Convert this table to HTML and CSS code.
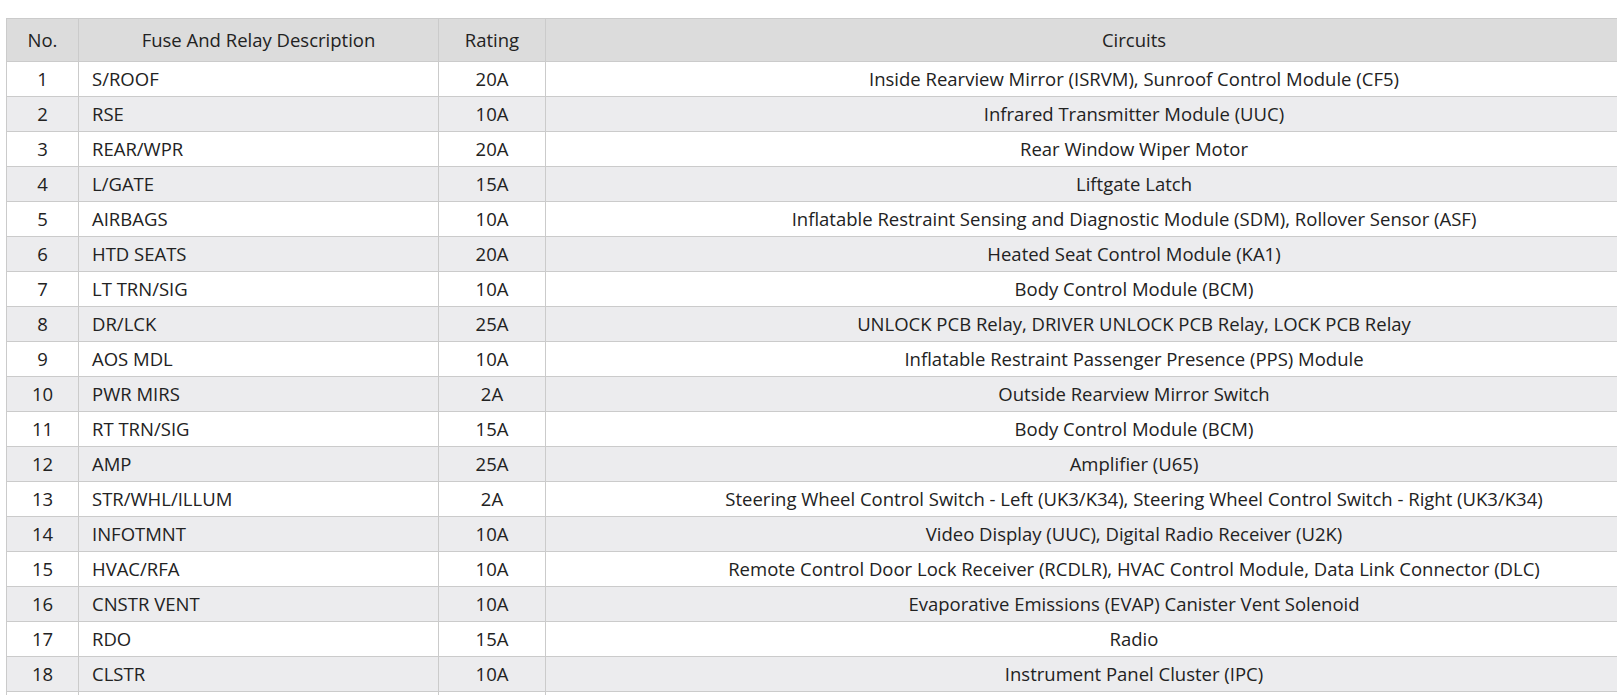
FILE: index.html
```html
<!DOCTYPE html>
<html lang="en">
<head>
<meta charset="utf-8">
<title>Fuse Table</title>
<link rel="stylesheet" href="styles.css">
</head>
<body>
<div class="wrap">
<table class="fuse-table">
<colgroup>
<col class="c-no"><col class="c-desc"><col class="c-rating"><col class="c-circ">
</colgroup>
<thead>
<tr><th>No.</th><th>Fuse And Relay Description</th><th>Rating</th><th>Circuits</th></tr>
</thead>
<tbody>
<tr><td class="num">1</td><td class="desc">S/ROOF</td><td class="num">20A</td><td class="circ">Inside Rearview Mirror (ISRVM), Sunroof Control Module (CF5)</td></tr>
<tr><td class="num">2</td><td class="desc">RSE</td><td class="num">10A</td><td class="circ">Infrared Transmitter Module (UUC)</td></tr>
<tr><td class="num">3</td><td class="desc">REAR/WPR</td><td class="num">20A</td><td class="circ">Rear Window Wiper Motor</td></tr>
<tr><td class="num">4</td><td class="desc">L/GATE</td><td class="num">15A</td><td class="circ">Liftgate Latch</td></tr>
<tr><td class="num">5</td><td class="desc">AIRBAGS</td><td class="num">10A</td><td class="circ">Inflatable Restraint Sensing and Diagnostic Module (SDM), Rollover Sensor (ASF)</td></tr>
<tr><td class="num">6</td><td class="desc">HTD SEATS</td><td class="num">20A</td><td class="circ">Heated Seat Control Module (KA1)</td></tr>
<tr><td class="num">7</td><td class="desc">LT TRN/SIG</td><td class="num">10A</td><td class="circ">Body Control Module (BCM)</td></tr>
<tr><td class="num">8</td><td class="desc">DR/LCK</td><td class="num">25A</td><td class="circ">UNLOCK PCB Relay, DRIVER UNLOCK PCB Relay, LOCK PCB Relay</td></tr>
<tr><td class="num">9</td><td class="desc">AOS MDL</td><td class="num">10A</td><td class="circ">Inflatable Restraint Passenger Presence (PPS) Module</td></tr>
<tr><td class="num">10</td><td class="desc">PWR MIRS</td><td class="num">2A</td><td class="circ">Outside Rearview Mirror Switch</td></tr>
<tr><td class="num">11</td><td class="desc">RT TRN/SIG</td><td class="num">15A</td><td class="circ">Body Control Module (BCM)</td></tr>
<tr><td class="num">12</td><td class="desc">AMP</td><td class="num">25A</td><td class="circ">Amplifier (U65)</td></tr>
<tr><td class="num">13</td><td class="desc">STR/WHL/ILLUM</td><td class="num">2A</td><td class="circ">Steering Wheel Control Switch - Left (UK3/K34), Steering Wheel Control Switch - Right (UK3/K34)</td></tr>
<tr><td class="num">14</td><td class="desc">INFOTMNT</td><td class="num">10A</td><td class="circ">Video Display (UUC), Digital Radio Receiver (U2K)</td></tr>
<tr><td class="num">15</td><td class="desc">HVAC/RFA</td><td class="num">10A</td><td class="circ">Remote Control Door Lock Receiver (RCDLR), HVAC Control Module, Data Link Connector (DLC)</td></tr>
<tr><td class="num">16</td><td class="desc">CNSTR VENT</td><td class="num">10A</td><td class="circ">Evaporative Emissions (EVAP) Canister Vent Solenoid</td></tr>
<tr><td class="num">17</td><td class="desc">RDO</td><td class="num">15A</td><td class="circ">Radio</td></tr>
<tr><td class="num">18</td><td class="desc">CLSTR</td><td class="num">10A</td><td class="circ">Instrument Panel Cluster (IPC)</td></tr>
<tr><td></td><td></td><td></td><td></td></tr>
</tbody>
</table>
</div>
</body>
</html>
```
FILE: styles.css
```css
html, body {
  margin: 0;
  padding: 0;
  overflow: hidden;
  background: #ffffff;
}
.wrap {
  padding: 18px 0 0 6px;
}
.fuse-table {
  border-collapse: collapse;
  table-layout: fixed;
  width: 1716px;
  font-family: "Open Sans", "Noto Sans", sans-serif;
  font-size: 18.5px;
  color: #222222;
}
.c-no { width: 72px; }
.c-desc { width: 360px; }
.c-rating { width: 107px; }
.c-circ { width: 1177px; }
.fuse-table th,
.fuse-table td {
  border: 1px solid #cbcbcb;
  padding: 0 13px;
  white-space: nowrap;
  line-height: 24px;
}
.fuse-table th {
  height: 42px;
  background: #dcdcdc;
  font-weight: 400;
  text-align: center;
}
.fuse-table td {
  height: 34px;
}
.fuse-table tbody tr:nth-child(even) td {
  background: #ececee;
}
.num, .circ { text-align: center; }
.desc { text-align: left; }
```
